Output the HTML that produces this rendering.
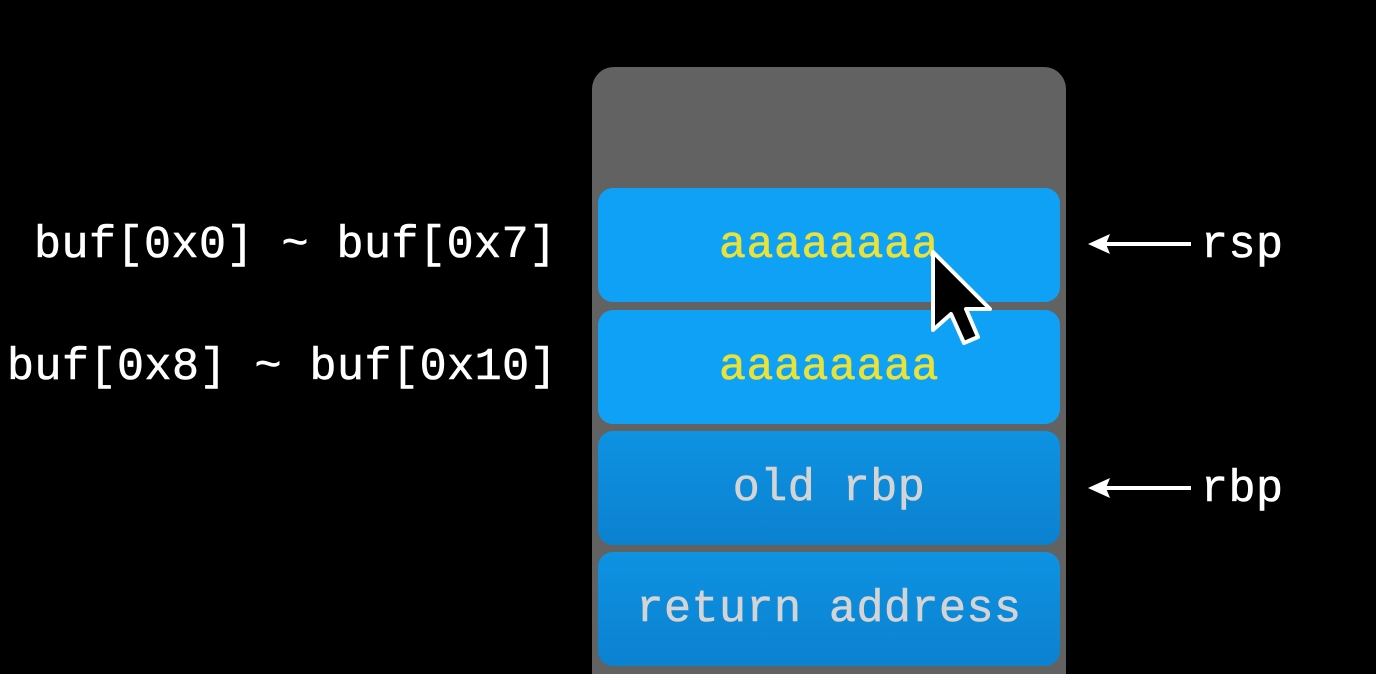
<!DOCTYPE html>
<html style="overflow:hidden;width:1376px;height:674px"><head><meta charset="utf-8"><style>
body{margin:0;width:1376px;height:674px;background:#000;overflow:hidden;position:relative;font-family:"Liberation Mono",monospace;}
.t{position:absolute;font-size:45px;line-height:50px;white-space:pre;letter-spacing:0.5px;-webkit-text-stroke:0.6px currentColor;}
.stack{position:absolute;left:592px;top:67px;width:474px;height:607px;background:#626262;border-radius:22px 22px 0 0;}
.box{position:absolute;left:598px;width:462px;height:114px;border-radius:15px;display:flex;align-items:center;justify-content:center;font-size:45px;letter-spacing:0.5px;-webkit-text-stroke:0.6px currentColor;}
.b1{background:#0ea1f5;color:#e8e23a;}
.b2{background:linear-gradient(#0e92e2,#0b82d0);color:#d4d4d4;}
</style></head><body>
<div class="stack"></div>
<div class="box b1" style="top:188px">aaaaaaaa</div>
<div class="box b1" style="top:310px">aaaaaaaa</div>
<div class="box b2" style="top:431px">old rbp</div>
<div class="box b2" style="top:552px">return address</div>
<div class="t" style="left:34px;top:221px;color:#fff">buf[0x0] ~ buf[0x7]</div>
<div class="t" style="left:7px;top:343px;color:#fff">buf[0x8] ~ buf[0x10]</div>
<div class="t" style="left:1201px;top:221px;color:#fff">rsp</div>
<div class="t" style="left:1201px;top:465px;color:#fff">rbp</div>
<svg style="position:absolute;left:0;top:0" width="1376" height="674">
<g fill="#fff">
<rect x="1104" y="242" width="87" height="4"/><polygon points="1088,244 1110,234 1106,244 1110,254"/>
<rect x="1104" y="486" width="87" height="4"/><polygon points="1088,488 1110,478 1106,488 1110,498"/>
</g>
<polygon points="933,252 933,330 951,314 964,343 978,337 966,309 990,309" fill="#000" stroke="#fff" stroke-width="4" stroke-linejoin="round"/>
</svg>
</body></html>
